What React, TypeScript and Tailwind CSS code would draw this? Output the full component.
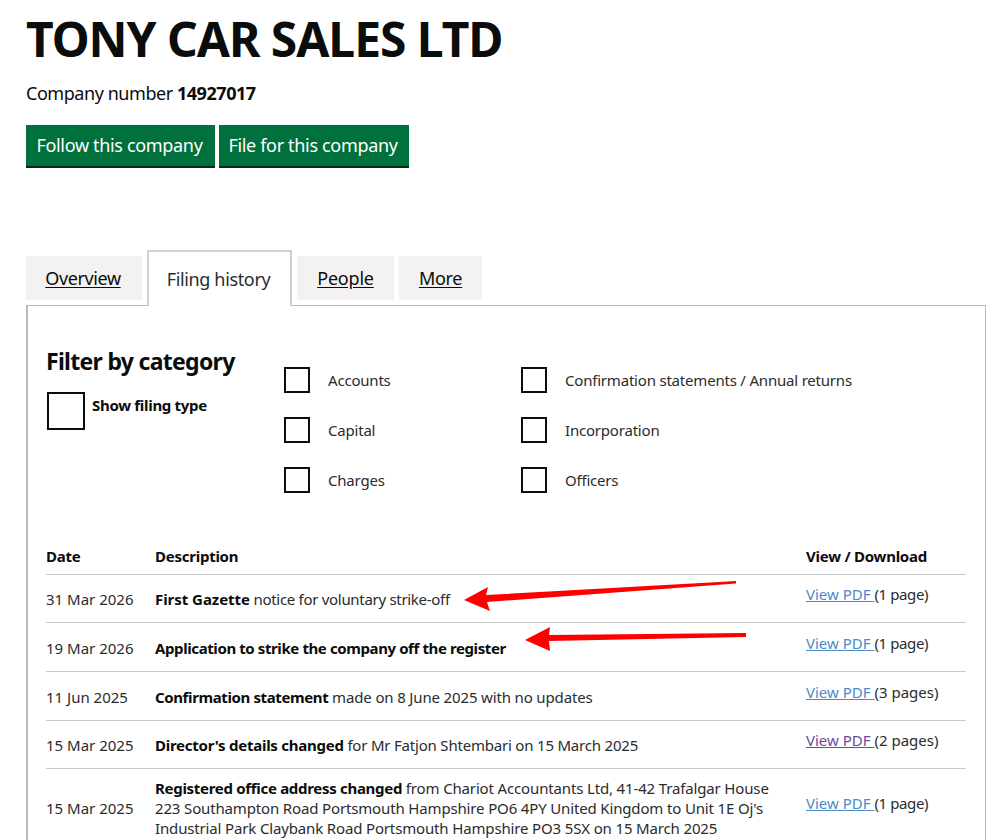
const font = { fontFamily: '"Noto Sans", sans-serif' };

const rows = [
  { date: "31 Mar 2026", bold: "First Gazette", rest: " notice for voluntary strike-off", pages: "(1 page)", h: "h-[48px]", bt: "tracking-[-0.05px]", rt: "tracking-[-0.3px]", pt: "tracking-[-0.4px]", link: "text-[#4c8bca] decoration-[#4c8bca]" },
  { date: "19 Mar 2026", bold: "Application to strike the company off the register", rest: "", pages: "(1 page)", h: "h-[49px]", bt: "tracking-[-0.4px]", rt: "", pt: "tracking-[-0.4px]", link: "text-[#4c8bca] decoration-[#4c8bca]" },
  { date: "11 Jun 2025", bold: "Confirmation statement", rest: " made on 8 June 2025 with no updates", pages: "(3 pages)", h: "h-[49px]", bt: "tracking-[-0.38px]", rt: "tracking-[-0.15px]", pt: "tracking-[0px]", link: "text-[#4c8bca] decoration-[#4c8bca]" },
  { date: "15 Mar 2025", bold: "Director's details changed", rest: " for Mr Fatjon Shtembari on 15 March 2025", pages: "(2 pages)", h: "h-[48px]", bt: "tracking-[-0.25px]", rt: "tracking-[-0.2px]", pt: "tracking-[0px]", link: "text-[#6f4a9c] decoration-[#6f4a9c]" },
];

function Check({ label }: { label: string }) {
  return (
    <div className="flex items-center h-[26px]">
      <span className="w-[26px] h-[26px] border-2 border-[#0b0c0c] shrink-0" />
      <span className="ml-[18px] text-[15px] text-[#2a2c2e] tracking-[-0.2px] whitespace-nowrap">{label}</span>
    </div>
  );
}

export default function App() {
  return (
    <div className="relative w-[994px] h-[840px] overflow-hidden bg-white text-[#0b0c0c]" style={font}>
      <div className="pl-[26px] pr-[8px]">
        <h1 className="pt-[9px] text-[48px] leading-[60px] font-bold tracking-[-1.05px] whitespace-nowrap">TONY CAR SALES LTD</h1>
        <p className="mt-[11px] text-[18px] leading-[26px] tracking-[-0.45px]">
          Company number <span className="font-bold">14927017</span>
        </p>
        <div className="mt-[19px] flex gap-[4px]">
          <button className="w-[189px] h-[43px] pr-[2px] bg-[#00703c] border-b-2 border-[#002d18] text-white text-[18px] tracking-[-0.33px]">Follow this company</button>
          <button className="w-[190px] h-[43px] pr-[2px] bg-[#00703c] border-b-2 border-[#002d18] text-white text-[18px] tracking-[-0.33px]">File for this company</button>
        </div>

        <div className="mt-[82px] flex items-end gap-[5px] h-[56px] relative z-10">
          <div className="w-[116px] h-[44px] mb-[6px] pr-[2px] bg-[#f3f2f1] flex items-center justify-center text-[18px] underline underline-offset-2 tracking-[-0.4px]">Overview</div>
          <div className="w-[145px] h-[56px] pr-[2px] bg-white border-2 border-b-0 border-[#cfd1d2] flex items-center justify-center text-[18px] tracking-[-0.35px] text-[#2a2c2e]">Filing history</div>
          <div className="w-[97px] h-[44px] mb-[6px] bg-[#f3f2f1] flex items-center justify-center text-[18px] underline underline-offset-2 tracking-[-0.2px]">People</div>
          <div className="w-[83px] h-[44px] mb-[6px] bg-[#f3f2f1] flex items-center justify-center text-[18px] underline underline-offset-2 tracking-[-0.3px]">More</div>
        </div>

        <div className="-mt-px w-[960px] border border-[#b8bbbd] border-l-2 pl-[18px] pr-[19px]">
          <div className="flex pt-[39px] h-[231px]">
            <div className="w-[238px]">
              <h2 className="text-[23px] leading-[32px] font-bold tracking-[-0.7px] whitespace-nowrap">Filter by category</h2>
              <div className="mt-[15px] flex">
                <span className="ml-px w-[38px] h-[38px] border-2 border-[#0b0c0c]" />
                <span className="ml-[7px] text-[15px] leading-[26px] font-bold tracking-[-0.3px]">Show filing type</span>
              </div>
            </div>
            <div className="w-[237px] pt-[22px] flex flex-col gap-[24px]">
              <Check label="Accounts" />
              <Check label="Capital" />
              <Check label="Charges" />
            </div>
            <div className="pt-[22px] flex flex-col gap-[24px]">
              <Check label="Confirmation statements / Annual returns" />
              <Check label="Incorporation" />
              <Check label="Officers" />
            </div>
          </div>

          <div className="flex h-[38px] pt-[1px] items-center border-b border-[#c9cbcd] text-[15px] font-bold tracking-[-0.25px]">
            <div className="w-[109px]">Date</div>
            <div className="w-[651px]">Description</div>
            <div>View / Download</div>
          </div>

          {rows.map((r) => (
            <div key={r.date + r.bold} className={`flex items-center pt-[2px] border-b border-[#c9cbcd] text-[15px] ${r.h}`}>
              <div className="w-[109px] text-[#2a2c2e]">{r.date}</div>
              <div className="w-[651px] text-[#2a2c2e] whitespace-nowrap"><b className={`text-[#0b0c0c] ${r.bt}`}>{r.bold}</b><span className={r.rt}>{r.rest}</span></div>
              <div className={`whitespace-nowrap -mt-[10px] text-[#2a2c2e] ${r.pt}`}><span className={`underline tracking-normal ${r.link}`}>View PDF&nbsp;</span>{r.pages}</div>
            </div>
          ))}

          <div className="flex items-center h-[78px] text-[15px]">
            <div className="w-[109px] text-[#2a2c2e]">15 Mar 2025</div>
            <div className="w-[651px] pr-[20px] leading-[20px] text-[#2a2c2e] tracking-[-0.15px]"><b className="text-[#0b0c0c] tracking-[-0.3px]">Registered office address changed</b> from Chariot Accountants Ltd, 41-42 Trafalgar House 223 Southampton Road Portsmouth Hampshire PO6 4PY United Kingdom to Unit 1E Oj's Industrial Park Claybank Road Portsmouth Hampshire PO3 5SX on 15 March 2025</div>
            <div className="whitespace-nowrap -mt-[10px] text-[#2a2c2e] tracking-[-0.4px]"><span className="underline tracking-normal text-[#4c8bca] decoration-[#4c8bca]">View PDF&nbsp;</span>(1 page)</div>
          </div>
        </div>
      </div>

      <svg className="absolute left-0 top-0 pointer-events-none" width="994" height="840" viewBox="0 0 994 840" fill="#ff0000">
        <path d="M464 600 L488 587 L486 595 L719 582 L736 581 L736 583.5 L487 602 L490 611 Z" />
        <path d="M525 640 L550 627 L549 635 L746 633 L746 637 L549 641 L550 651 Z" />
      </svg>
    </div>
  );
}
